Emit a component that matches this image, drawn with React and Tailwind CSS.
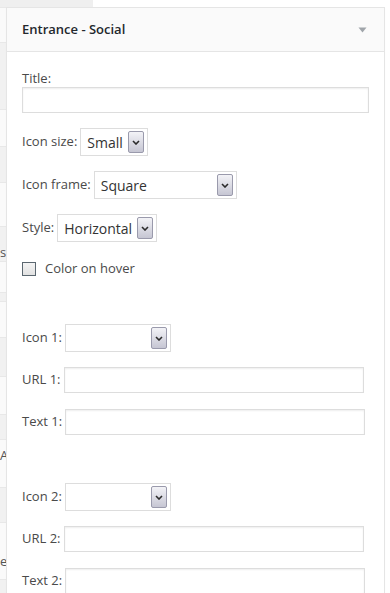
import React from 'react';

const font = { fontFamily: '"Open Sans", "Liberation Sans", sans-serif' };

// background rows of the admin list behind the widget
const stripRows = [
  { h: 8, c: 'bg-[#efefef]' },
  { h: 35, c: 'bg-[#fafafa]' },
  { h: 67, c: 'bg-[#f1f1f1]' },
  { h: 37, c: 'bg-[#fafafa]' },
  { h: 36, c: 'bg-[#f1f1f1]' },
  { h: 44, c: 'bg-[#fafafa]' },
  { h: 35, c: 'bg-[#f1f1f1] items-end pb-[2px]', t: 's.' },
  { h: 31, c: 'bg-[#fafafa]' },
  { h: 9, c: 'bg-[#f1f1f1]' },
  { h: 36, c: 'bg-[#fafafa]' },
  { h: 39, c: 'bg-[#f1f1f1]' },
  { h: 38, c: 'bg-[#fafafa]' },
  { h: 25, c: 'bg-[#f1f1f1]' },
  { h: 48, c: 'bg-[#fafafa] items-start pt-[9px]', t: 'A' },
  { h: 35, c: 'bg-[#f1f1f1]' },
  { h: 57, c: 'bg-[#fafafa] items-start pt-[32px]', t: 'e' },
  { h: 40, c: 'bg-[#f1f1f1]' },
];

function Arrow() {
  return (
    <div className="flex h-[22px] w-[16px] items-center justify-center rounded-[2px] border border-[#9a9aac] bg-gradient-to-b from-[#f3f3f7] to-[#c6c6d3]">
      <svg width="8" height="5" viewBox="0 0 8 5">
        <path d="M1 1 L4 4 L7 1" fill="none" stroke="#2b2b2b" strokeWidth="1.6" />
      </svg>
    </div>
  );
}

function Select({ value, width }) {
  return (
    <div className={`flex h-[28px] items-center justify-between border border-[#dddddd] bg-white pl-[6px] pr-[3px] ${width}`}>
      <span className="text-[14px] text-[#333]">{value}</span>
      <Arrow />
    </div>
  );
}

function Input({ width }) {
  return <div className={`h-[26px] border border-[#dddddd] bg-white shadow-[inset_0_1px_2px_rgba(0,0,0,0.07)] ${width}`} />;
}

function Row({ label, children, className = '' }) {
  return (
    <div className={`flex items-center gap-[3px] ${className}`}>
      <span className="text-[13px] text-[#4a4a4a]">{label}</span>
      {children}
    </div>
  );
}

export default function App() {
  return (
    <div className="relative h-[593px] w-[390px] overflow-hidden bg-white" style={font}>
      {/* page behind the widget */}
      <div className="flex w-[93px] flex-col">
        {stripRows.map((r, i) => (
          <div key={i} className={`flex overflow-hidden border-b border-[#e8e8e8] ${r.t ? '' : 'items-center'} ${r.c}`} style={{ height: r.h }}>
            {r.t && <span className="text-[13px] leading-none text-[#555]">{r.t}</span>}
          </div>
        ))}
      </div>

      {/* widget panel */}
      <div className="absolute left-[6px] top-[7px] w-[379px] border border-[#e5e5e5] bg-white shadow-[0_1px_1px_rgba(0,0,0,0.04)]">
        <div className="flex h-[44px] items-center justify-between border-b border-[#e5e5e5] bg-[#fafafa] pl-[15px] pr-[17px]">
          <span className="text-[13px] font-semibold text-[#23282d]">Entrance - Social</span>
          <svg width="9" height="6" viewBox="0 0 9 6">
            <path d="M0.5 0.5 L8.5 0.5 L4.5 5.5 Z" fill="#a0a5aa" />
          </svg>
        </div>

        <div className="flex flex-col px-[15px] pb-[20px] pt-[17px]">
          <span className="h-[18px] text-[13px] leading-[18px] text-[#4a4a4a]">Title:</span>
          <Input width="w-[347px]" />

          <Row label="Icon size:" className="mt-[15px]">
            <Select value="Small" width="w-[68px]" />
          </Row>
          <Row label="Icon frame:" className="mt-[15px]">
            <Select value="Square" width="w-[143px]" />
          </Row>
          <Row label="Style:" className="mt-[15px]">
            <Select value="Horizontal" width="w-[100px]" />
          </Row>

          <div className="mt-[18px] flex h-[18px] items-center gap-[9px]">
            <div className="h-[14px] w-[14px] border border-[#5b6770] bg-gradient-to-b from-[#f4f4f4] to-[#e2e2e2]" />
            <span className="text-[13px] text-[#4a4a4a]">Color on hover</span>
          </div>

          <Row label="Icon 1:" className="mt-[46px]">
            <Select value="" width="w-[106px]" />
          </Row>
          <Row label="URL 1:" className="mt-[15px]">
            <Input width="w-[300px]" />
          </Row>
          <Row label="Text 1:" className="mt-[16px]">
            <Input width="w-[300px]" />
          </Row>

          <Row label="Icon 2:" className="mt-[48px]">
            <Select value="" width="w-[106px]" />
          </Row>
          <Row label="URL 2:" className="mt-[15px]">
            <Input width="w-[300px]" />
          </Row>
          <Row label="Text 2:" className="mt-[16px]">
            <Input width="w-[300px]" />
          </Row>
        </div>
      </div>
    </div>
  );
}
